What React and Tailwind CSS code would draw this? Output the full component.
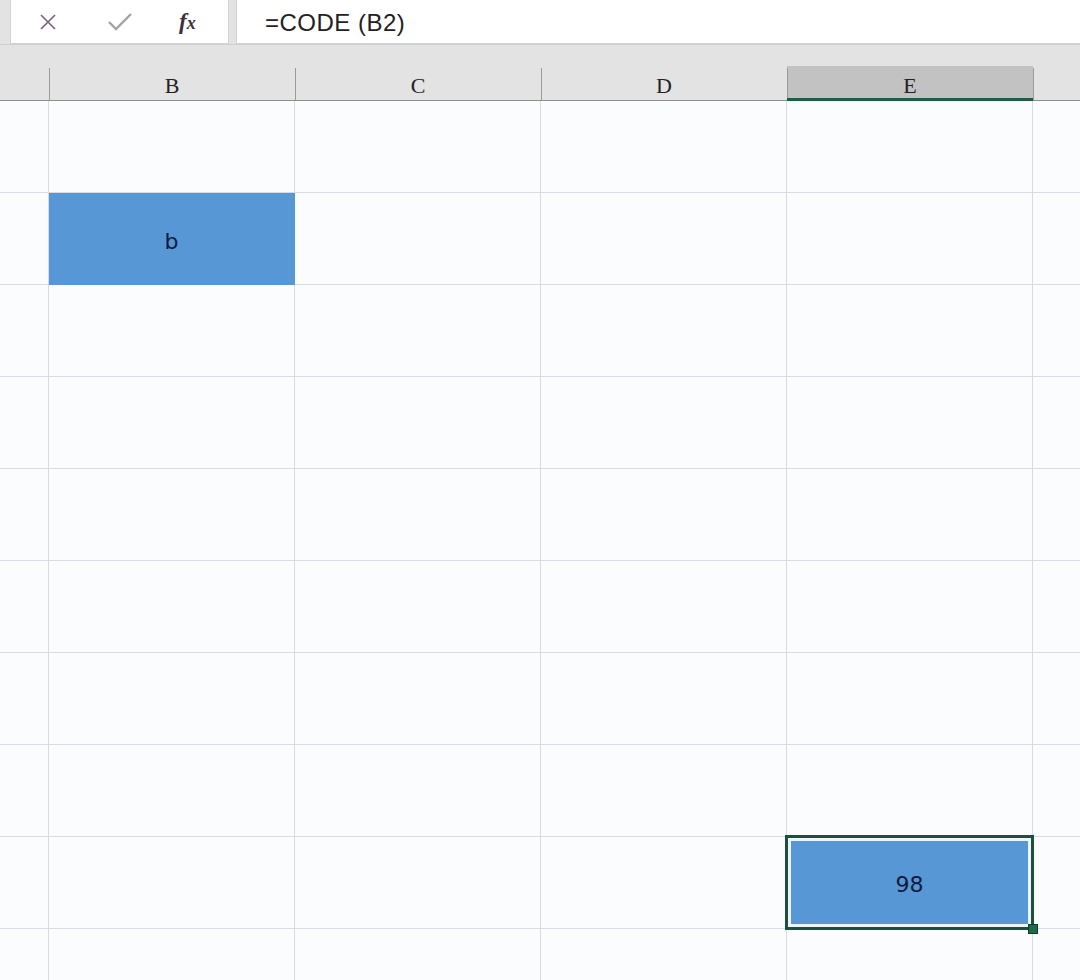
import React from 'react'

const COLS = ['A', 'B', 'C', 'D', 'E', 'F']
const WIDTHS = ['w-[49px]', 'w-[246px]', 'w-[246px]', 'w-[246px]', 'w-[246px]', 'w-[48px]']

function FormulaBar() {
  return (
    <div className="flex h-[45px] gap-[7px] bg-[#e3e3e3] border-b border-[#cfcfcf]">
      <div className="ml-[10px] w-[219px] h-[44px] bg-white border-l border-r border-b border-[#d2d2d2] flex items-center">
        <svg className="ml-[28px]" width="18" height="18" viewBox="0 0 18 18">
          <path d="M2 2 L16 16 M16 2 L2 16" stroke="#75627a" strokeWidth="1.6" fill="none" />
        </svg>
        <svg className="ml-[50px]" width="26" height="20" viewBox="0 0 26 20">
          <path d="M2 10 L9 17 L24 2" stroke="#a3a3a3" strokeWidth="2.4" fill="none" />
        </svg>
        <span className="ml-[46px] text-[23px] italic font-bold text-[#3a2f3f] leading-none" style={{ fontFamily: '"Liberation Serif", serif' }}>
          f<span className="text-[18px]">x</span>
        </span>
      </div>
      <div className="flex-1 h-[44px] bg-white border-l border-b border-[#d2d2d2] flex items-center">
        <span className="ml-[28px] text-[24px] text-[#222] tracking-[0.5px] mt-[2px]" style={{ fontFamily: '"Liberation Sans", sans-serif' }}>
          =CODE (B2)
        </span>
      </div>
    </div>
  )
}

function HeaderRow() {
  return (
    <div className="bg-[#e3e3e3] pt-[21px]">
      <div className="flex h-[35px] border-b border-[#8f8f8f]">
        {COLS.map((c, i) => (
          <div
            key={c}
            className={
              WIDTHS[i] +
              ' shrink-0 flex items-center justify-center relative ' +
              (c === 'E' ? 'bg-[#c2c2c2]' : '')
            }
          >
            {i > 0 && <div className="absolute left-0 top-[2px] bottom-0 w-px bg-[#9a9a9a]" />}
            {c === 'E' && <div className="absolute left-0 right-0 -bottom-px h-[3px] bg-[#1f5c48]" />}
            {i > 0 && i < 5 && (
              <span className="text-[22px] text-[#222] mt-[4px]" style={{ fontFamily: '"Liberation Serif", serif' }}>
                {c}
              </span>
            )}
          </div>
        ))}
      </div>
    </div>
  )
}

function Cell({ col, row }) {
  const filledB = col === 1 && row === 1
  const selected = col === 4 && row === 8
  return (
    <div
      className={
        WIDTHS[col] +
        ' shrink-0 h-[92px] border-r border-b flex items-center justify-center relative ' +
        (filledB ? 'bg-[#5797d6] border-[#5797d6]' : 'bg-[#fbfcfe] border-[#d7dce4]')
      }
    >
      {filledB && (
        <span className="text-[22px] text-[#111a3a] mt-[6px]" style={{ fontFamily: '"DejaVu Sans", sans-serif' }}>
          b
        </span>
      )}
      {selected && (
        <div className="absolute -left-[2px] -top-[2px] -right-[2px] -bottom-[2px] border-[3px] border-[#1f4d3e] z-10">
          <div className="w-full h-full border-[3px] border-[#eef4fb] bg-[#5797d6] flex items-center justify-center">
            <span className="text-[22px] text-[#111a3a] mt-[4px]" style={{ fontFamily: '"DejaVu Sans", sans-serif' }}>
              98
            </span>
          </div>
          <div className="absolute -right-[7px] -bottom-[7px] w-[10px] h-[10px] bg-[#1e6b47] border border-[#0f3a28]" />
        </div>
      )}
    </div>
  )
}

export default function App() {
  const rows = Array.from({ length: 10 }, (_, i) => i)
  return (
    <div className="w-[1080px] h-[980px] overflow-hidden bg-[#fbfcfe]">
      <FormulaBar />
      <HeaderRow />
      <div>
        {rows.map(r => (
          <div key={r} className="flex">
            {COLS.map((c, ci) => (
              <Cell key={c} col={ci} row={r} />
            ))}
          </div>
        ))}
      </div>
    </div>
  )
}
